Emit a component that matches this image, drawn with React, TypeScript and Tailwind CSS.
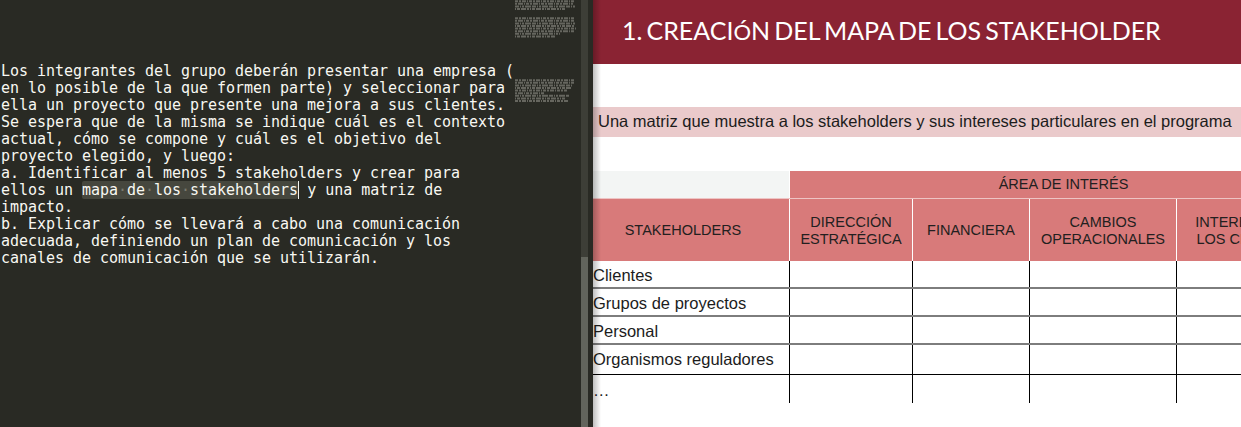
const lines = [
  "Los integrantes del grupo deberán presentar una empresa (",
  "en lo posible de la que formen parte) y seleccionar para",
  "ella un proyecto que presente una mejora a sus clientes.",
  "Se espera que de la misma se indique cuál es el contexto",
  "actual, cómo se compone y cuál es el objetivo del",
  "proyecto elegido, y luego:",
  "a. Identificar al menos 5 stakeholders y crear para",
  null,
  "impacto.",
  "b. Explicar cómo se llevará a cabo una comunicación",
  "adecuada, definiendo un plan de comunicación y los",
  "canales de comunicación que se utilizarán.",
];

const dashes = ["3 1 2 1 4 1 1 1", "2 1 5 1 1 1 3 1", "4 1 1 1 2 1 6 1", "1 1 3 1 5 1 2 1"];

function Mini({ rows, className }: { rows: number[]; className: string }) {
  const h = rows.length * 2.6;
  return (
    <svg className={className} width="62" height={h} viewBox={`0 0 62 ${h}`}>
      {rows.map((w, i) => (
        <line key={i} x1="0" x2={w} y1={i * 2.6 + 1.2} y2={i * 2.6 + 1.2} stroke="#8f8f88" strokeWidth="2" strokeDasharray={dashes[i % 4]} opacity="0.6" />
      ))}
    </svg>
  );
}

const cols = ["w-[196px]", "w-[123px]", "w-[117px]", "w-[147px]", "w-[144px]"];
const rows = ["Clientes", "Grupos de proyectos", "Personal"];

export default function App() {
  return (
    <div className="flex h-[427px] w-[1241px] overflow-hidden bg-white">
      <div className="relative flex h-full w-[581px] flex-col bg-[#292a24] pl-px pt-[63px] text-[15px] leading-[17px] tracking-[-0.03px] text-[#f8f8f2] [font-family:'DejaVu_Sans_Mono',monospace] whitespace-pre">
        {lines.map((l, i) =>
          l === null ? (
            <div key={i} className="h-[17px]">
              ellos un <span className="rounded-[2px] bg-[#46473e]">mapa<span className="text-[#77786c]">·</span>de<span className="text-[#77786c]">·</span>los<span className="text-[#77786c]">·</span>stakeholders</span>
              <span className="relative"><span className="absolute left-0 top-0 h-[18px] w-px bg-[#f2f2ee]" /></span> y una matriz de
            </div>
          ) : (
            <div key={i} className="h-[17px]">{l}</div>
          )
        )}
        <div className="absolute left-[515px] top-0 flex flex-col blur-[0.4px]">
          <Mini className="block" rows={[60, 58, 60, 50]} />
          <Mini className="mt-[7px] block" rows={[60, 59, 60, 59, 61, 60, 45, 40]} />
          <Mini className="mt-[41px] block" rows={[60, 60, 58, 56, 52, 30, 54, 50, 54]} />
        </div>
      </div>
      <div className="flex h-full w-[7px] flex-col bg-[#3d3e37]">
        <div className="mt-[257px] h-[170px] bg-[#62645c]" />
      </div>
      <div className="h-full w-[5px] bg-[#292a24]" />
      <div className="relative flex h-full flex-1 flex-col overflow-hidden">
        <div className="absolute inset-y-0 left-0 w-[8px] bg-gradient-to-r from-black/25 to-transparent" />
        <div className="flex h-[64px] items-center bg-[#8a2333] pb-[2px] pl-[29px] text-[25px] [word-spacing:-2.3px] text-white [font-family:Lato,sans-serif]">
          <span>1. CREACI<span className="text-[22px]">Ó</span>N DEL MAPA DE LOS STAKEHOLDER</span>
        </div>
        <div className="mt-[43px] flex h-[30px] items-center bg-[#eacacb] pb-[2px] pl-[5px] text-[16.5px] text-[#1c1c1c] [font-family:'Liberation_Sans',sans-serif] whitespace-nowrap">
          Una matriz que muestra a los stakeholders y sus intereses particulares en el programa
        </div>
        <div className="mt-[34px] flex w-[800px] flex-col text-[#231f20] [font-family:'Liberation_Sans',sans-serif]">
          <div className="flex h-[27px]">
            <div className="w-[196px] bg-[#f3f5f4]" />
            <div className="flex h-full w-[548px] items-center justify-center border-l border-white bg-[#d87a7a] text-[14.5px]">ÁREA DE INTERÉS</div>
          </div>
          <div className="flex h-[63px] border-t border-[#eec4c4] bg-[#d87a7a] text-center text-[14.5px] leading-[17px]">
            <div className={`${cols[0]} flex items-center justify-center pr-4 pt-[1px]`}>STAKEHOLDERS</div>
            <div className={`${cols[1]} flex items-center justify-center border-l border-white pt-[2px]`}>DIRECCIÓN<br />ESTRATÉGICA</div>
            <div className={`${cols[2]} flex items-center justify-center border-l border-white pt-[1px]`}>FINANCIERA</div>
            <div className={`${cols[3]} flex items-center justify-center border-l border-white pt-[2px]`}>CAMBIOS<br />OPERACIONALES</div>
            <div className={`${cols[4]} flex items-center justify-center border-l border-white pt-[2px]`}>INTERESES DE<br />LOS CLIENTES</div>
          </div>
          {rows.map((r) => (
            <div key={r} className="flex h-[28px] border-b-2 border-[#7d7d7d] text-[16.5px] text-[#1c1c1c]">
              <div className={`${cols[0]} flex items-center pt-[2px]`}>{r}</div>
              {cols.slice(1).map((c) => (
                <div key={c} className={`${c} border-l border-black`} />
              ))}
            </div>
          ))}
          <div className="flex h-[30px] border-b border-black text-[16.5px] text-[#1c1c1c]">
            <div className={`${cols[0]} flex items-center`}>Organismos reguladores</div>
            {cols.slice(1).map((c) => (
              <div key={c} className={`${c} border-l border-black`} />
            ))}
          </div>
          <div className="flex h-[28px] text-[16.5px] text-[#1c1c1c]">
            <div className={`${cols[0]} flex items-center pt-[3px]`}>…</div>
            {cols.slice(1).map((c) => (
              <div key={c} className={`${c} border-l border-black`} />
            ))}
          </div>
        </div>
      </div>
    </div>
  );
}
